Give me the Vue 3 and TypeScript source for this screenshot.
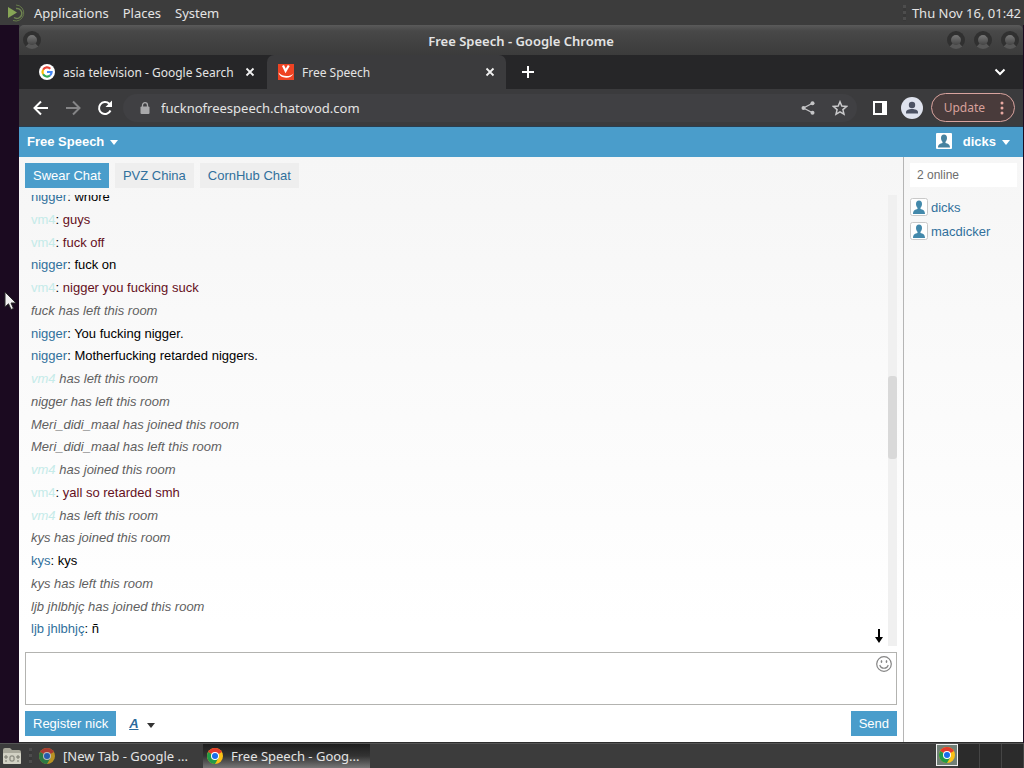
<script setup lang="ts">
import { ref } from 'vue'

interface Line {
  nick: string
  text: string
  kind: 'plain' | 'red' | 'event'
  pale?: boolean
}

const lines: Line[] = [
  { nick: 'nigger', text: 'whore', kind: 'plain' },
  { nick: 'vm4', text: 'guys', kind: 'red', pale: true },
  { nick: 'vm4', text: 'fuck off', kind: 'red', pale: true },
  { nick: 'nigger', text: 'fuck on', kind: 'plain' },
  { nick: 'vm4', text: 'nigger you fucking suck', kind: 'red', pale: true },
  { nick: 'fuck', text: 'has left this room', kind: 'event' },
  { nick: 'nigger', text: 'You fucking nigger.', kind: 'plain' },
  { nick: 'nigger', text: 'Motherfucking retarded niggers.', kind: 'plain' },
  { nick: 'vm4', text: 'has left this room', kind: 'event', pale: true },
  { nick: 'nigger', text: 'has left this room', kind: 'event' },
  { nick: 'Meri_didi_maal', text: 'has joined this room', kind: 'event' },
  { nick: 'Meri_didi_maal', text: 'has left this room', kind: 'event' },
  { nick: 'vm4', text: 'has joined this room', kind: 'event', pale: true },
  { nick: 'vm4', text: 'yall so retarded smh', kind: 'red', pale: true },
  { nick: 'vm4', text: 'has left this room', kind: 'event', pale: true },
  { nick: 'kys', text: 'has joined this room', kind: 'event' },
  { nick: 'kys', text: 'kys', kind: 'plain' },
  { nick: 'kys', text: 'has left this room', kind: 'event' },
  { nick: 'ljb jhlbhjç', text: 'has joined this room', kind: 'event' },
  { nick: 'ljb jhlbhjç', text: 'ñ', kind: 'plain' },
]

const rooms = ['Swear Chat', 'PVZ China', 'CornHub Chat']
const room = ref(rooms[0])
const users = ['dicks', 'macdicker']
const draft = ref('')
const address = ref('fucknofreespeech.chatovod.com')
</script>

<template>
  <div class="desktop">
    <header class="panel">
      <svg class="mate" viewBox="0 0 20 20" width="20" height="20" aria-hidden="true">
        <path d="M9 2a8 8 0 1 1-3 15.500" fill="none" stroke="#667a4a" stroke-width="1" />
        <path d="M9 5.500a5 5 0 1 1-2 9" fill="none" stroke="#6f8451" stroke-width="1.500" />
        <path d="M1 4v11l9-5.500z" fill="#87a556" />
      </svg>
      <button class="menu">Applications</button>
      <button class="menu">Places</button>
      <button class="menu">System</button>
      <span class="grip end"></span>
      <time class="clock">Thu Nov 16, 01:42</time>
    </header>

    <div class="stage">
      <section class="window">
        <div class="titlebar">
          <button class="knob" aria-label="Window menu"></button>
          <h1>Free Speech - Google Chrome</h1>
          <div class="knobs">
            <button class="knob" aria-label="Minimize"></button>
            <button class="knob" aria-label="Maximize"></button>
            <button class="knob" aria-label="Close window"></button>
          </div>
        </div>

        <div class="tabs">
          <div class="tab">
            <svg viewBox="0 0 16 16" width="16" height="16" aria-hidden="true">
              <circle cx="8" cy="8" r="8" fill="#fff" />
              <g fill="none" stroke-width="2.200">
                <path d="M4.100 5.700A4.600 4.600 0 0 1 11.300 4.700" stroke="#ea4335" />
                <path d="M4.100 5.700a4.600 4.600 0 0 0 0 4.600" stroke="#fbbc05" />
                <path d="M4.100 10.300a4.600 4.600 0 0 0 6.900 1.200" stroke="#34a853" />
                <path d="M11 11.500A4.600 4.600 0 0 0 12.600 8H8" stroke="#4285f4" />
              </g>
            </svg>
            <span class="label">asia television - Google Search</span>
            <button class="x" aria-label="Close tab">
              <svg viewBox="0 0 10 10" width="10" height="10"><path d="M1.500 1.500l7 7M8.500 1.500l-7 7" stroke="#f1f1f1" stroke-width="1.800" /></svg>
            </button>
          </div>
          <div class="tab active">
            <svg viewBox="0 0 16 16" width="16" height="16" aria-hidden="true">
              <rect width="16" height="16" fill="#ee4323" />
              <path d="M5 1.500l2.600 5.500 3.200-5.500" fill="none" stroke="#fff" stroke-width="2.200" />
              <path d="M.500 8.500c1.500 6.500 12.500 7 15 1-2 2-4 2.500-7 2.500s-6-1-8-3.500z" fill="#fff" />
            </svg>
            <span class="label">Free Speech</span>
            <button class="x" aria-label="Close tab">
              <svg viewBox="0 0 10 10" width="10" height="10"><path d="M1.500 1.500l7 7M8.500 1.500l-7 7" stroke="#f1f1f1" stroke-width="1.800" /></svg>
            </button>
          </div>
          <button class="plus" aria-label="New tab">
            <svg viewBox="0 0 12 12" width="12" height="12"><path d="M6 0v12M0 6h12" stroke="#fff" stroke-width="2" /></svg>
          </button>
          <button class="chev" aria-label="Search tabs">
            <svg viewBox="0 0 12 8" width="12" height="8"><path d="M1.500 1.500L6 6l4.500-4.500" fill="none" stroke="#fff" stroke-width="2" /></svg>
          </button>
        </div>

        <div class="toolbar">
          <button aria-label="Back">
            <svg viewBox="0 0 16 16" width="16" height="16"><path d="M15 8H2M8 1.500L1.500 8 8 14.500" fill="none" stroke="#fff" stroke-width="2" /></svg>
          </button>
          <button aria-label="Forward">
            <svg viewBox="0 0 16 16" width="16" height="16"><path d="M1 8h13M8 1.500L14.500 8 8 14.500" fill="none" stroke="#858587" stroke-width="2" /></svg>
          </button>
          <button aria-label="Reload">
            <svg viewBox="0 0 16 16" width="16" height="16"><path d="M13.500 10.500A6 6 0 1 1 12.300 3.800L13.500 5" fill="none" stroke="#fff" stroke-width="2" /><path d="M15 .500V7H8.500z" fill="#fff" /></svg>
          </button>
          <label class="address">
            <svg viewBox="0 0 10 12" width="10" height="12" aria-hidden="true"><path d="M2.500 5V3.200a2.500 2.500 0 0 1 5 0V5" fill="none" stroke="#a9a9ab" stroke-width="1.300" /><rect x=".500" y="4.500" width="9" height="7.500" rx="1" fill="#a9a9ab" /></svg>
            <input v-model="address" aria-label="Address" />
            <svg viewBox="0 0 14 14" width="14" height="14" aria-hidden="true"><path d="M11.500 2.200L2.500 7l9 4.800" fill="none" stroke="#c5c5c7" stroke-width="1.300" /><g fill="#c5c5c7"><circle cx="11.500" cy="2.200" r="2" /><circle cx="2.500" cy="7" r="2" /><circle cx="11.500" cy="11.800" r="2" /></g></svg>
            <svg class="star" viewBox="0 0 16 16" width="16" height="16" aria-hidden="true"><path d="M8 1.800l1.800 4.300 4.700.4-3.600 3.100 1.100 4.600-4-2.400-4 2.400 1.100-4.600L1.500 6.500l4.700-.4z" fill="none" stroke="#c9c9cb" stroke-width="1.500" /></svg>
          </label>
          <button class="side" aria-label="Side panel">
            <svg viewBox="0 0 14 14" width="14" height="14"><path d="M0 0h14v14H0zM2 2v10h7V2z" fill="#fff" fill-rule="evenodd" /></svg>
          </button>
          <button class="avatar" aria-label="Profile">
            <svg viewBox="0 0 22 22" width="22" height="22"><circle cx="11" cy="11" r="11" fill="#dfe3ee" /><circle cx="11" cy="8" r="3.200" fill="#4c5263" /><path d="M5 16.500v-1.300c0-4.300 12-4.300 12 0v1.300z" fill="#4c5263" /></svg>
          </button>
          <button class="update">
            Update
            <svg viewBox="0 0 4 14" width="4" height="14" aria-hidden="true"><g fill="#e9a9a2"><circle cx="2" cy="2" r="1.500" /><circle cx="2" cy="7" r="1.500" /><circle cx="2" cy="12" r="1.500" /></g></svg>
          </button>
        </div>

        <div class="site">
          <div class="bar">
            <button>Free Speech <i class="caret"></i></button>
            <button>
              <svg class="person" viewBox="0 0 16 16" width="16" height="16" aria-hidden="true"><rect width="16" height="16" rx="1" fill="#fff" /><path d="M5 5a3 3.500 0 1 1 6 0c0 2-.8 3-1.500 3.800v1.200c2 .7 4.500 1 4.500 4.500H2c0-3.500 2.500-3.800 4.500-4.500V8.800C5.800 8 5 7 5 5z" fill="#4682a0" /></svg>
              dicks <i class="caret"></i>
            </button>
          </div>
          <div class="body">
            <main class="chat">
              <nav class="rooms">
                <button v-for="r in rooms" :key="r" :class="{ on: r === room }" @click="room = r">{{ r }}</button>
              </nav>
              <div class="logbox">
                <div class="log">
                  <p v-for="(l, i) in lines" :key="i" :class="l.kind">
                    <template v-if="l.kind === 'event'"><span :class="{ pale: l.pale }">{{ l.nick }}</span>{{ ' ' + l.text }}</template>
                    <template v-else><a href="#" :class="{ pale: l.pale }">{{ l.nick }}</a>{{ ': ' }}<span class="msg">{{ l.text }}</span></template>
                  </p>
                </div>
                <button class="down" aria-label="Scroll to bottom">
                  <svg viewBox="0 0 8 14" width="8" height="14"><path d="M3 0h2v8h3l-4 6-4-6h3z" fill="#000" /></svg>
                </button>
                <div class="track"><div class="thumb"></div></div>
              </div>
              <div class="compose">
                <textarea v-model="draft" aria-label="Message"></textarea>
                <button class="smile" aria-label="Smileys">
                  <svg viewBox="0 0 16 16" width="16" height="16"><circle cx="8" cy="8" r="7.300" fill="none" stroke="#858585" stroke-width="1.200" /><path d="M3.800 9c1 4.300 7.400 4.300 8.400 0" fill="none" stroke="#858585" stroke-width="1.200" /><ellipse cx="5.500" cy="5.500" rx=".8" ry="1.600" fill="#858585" /><ellipse cx="10.500" cy="5.500" rx=".8" ry="1.600" fill="#858585" /></svg>
                </button>
              </div>
              <div class="actions">
                <button class="blue">Register nick</button>
                <button class="font" aria-label="Text style"><span>A</span><i class="caret"></i></button>
                <button class="blue send">Send</button>
              </div>
            </main>
            <aside class="people">
              <div class="count">2 online</div>
              <a v-for="u in users" :key="u" href="#">
                <svg viewBox="0 0 18 18" width="18" height="18" aria-hidden="true"><rect x=".500" y=".500" width="17" height="17" rx="2" fill="#fff" stroke="#c9c9c9" /><path d="M6 6a3 3.500 0 1 1 6 0c0 2-.8 3-1.500 3.800V11c2 .7 4.500 1 4.500 5H3c0-4 2.500-4.300 4.500-5V9.800C6.800 9 6 8 6 6z" fill="#4389ab" /></svg>
                {{ u }}
              </a>
            </aside>
          </div>
        </div>
      </section>
      <svg class="cursor" viewBox="0 0 13 20" width="13" height="20" aria-hidden="true"><path d="M1 1v15l3.500-3.200L7 18.500l2.500-1L7 12h5z" fill="#f1f1f1" stroke="#2a2a2a" stroke-width="1" /></svg>
    </div>

    <footer class="panel taskbar">
      <button class="files" aria-label="Files">
        <svg viewBox="0 0 20 18" width="20" height="18"><path d="M1 3q0-2 2-2h5l2 2h7q2 0 2 2v10q0 2-2 2H3q-2 0-2-2z" fill="#aaa99c" /><rect x="1" y="6" width="18" height="11" rx="1" fill="#d2d1c4" /><g fill="none" stroke="#77766c"><rect x="8" y="9" width="4" height="5" rx="1" /><path d="M3 9h2v2H3zM15 9h2v2h-2zM3 14h2M15 14h2" /></g></svg>
      </button>
      <span class="grip"></span>
      <button class="task dim">
        <svg viewBox="0 0 16 16" width="16" height="16" aria-hidden="true"><circle cx="8" cy="8" r="8" fill="#fbc116" /><path d="M8 8L1.100 4A8 8 0 0 1 14.900 4z" fill="#e33b2e" /><path d="M1.100 4A8 8 0 0 0 8 16l3.500-6L8 8z" fill="#229a48" /><circle cx="8" cy="8" r="4" fill="#fff" /><circle cx="8" cy="8" r="3" fill="#1a6dea" /></svg>
        <span>[New Tab - Google ...</span>
      </button>
      <button class="task current">
        <svg viewBox="0 0 16 16" width="16" height="16" aria-hidden="true"><circle cx="8" cy="8" r="8" fill="#fbc116" /><path d="M8 8L1.100 4A8 8 0 0 1 14.900 4z" fill="#e33b2e" /><path d="M1.100 4A8 8 0 0 0 8 16l3.500-6L8 8z" fill="#229a48" /><circle cx="8" cy="8" r="4" fill="#fff" /><circle cx="8" cy="8" r="3" fill="#1a6dea" /></svg>
        <span>Free Speech - Goog...</span>
      </button>
      <div class="spaces">
        <button class="shown" aria-label="Workspace 1">
          <svg viewBox="0 0 16 16" width="16" height="16"><circle cx="8" cy="8" r="8" fill="#fbc116" /><path d="M8 8L1.100 4A8 8 0 0 1 14.900 4z" fill="#e33b2e" /><path d="M1.100 4A8 8 0 0 0 8 16l3.500-6L8 8z" fill="#229a48" /><circle cx="8" cy="8" r="4" fill="#fff" /><circle cx="8" cy="8" r="3" fill="#1a6dea" /></svg>
        </button>
        <button aria-label="Workspace 2"></button>
        <button aria-label="Workspace 3"></button>
        <button aria-label="Workspace 4"></button>
      </div>
    </footer>
  </div>
</template>

<style>
body {
  margin: 0;
}
</style>

<style scoped>
* {
  box-sizing: border-box;
}
.desktop {
  display: flex;
  flex-direction: column;
  height: 100vh;
  overflow: hidden;
  background: #1b0a20;
  font-family: 'Noto Sans', 'Open Sans', sans-serif;
  font-size: 13px;
  color: #e4e4e4;
}
button {
  display: flex;
  align-items: center;
  justify-content: center;
  padding: 0;
  border: 0;
  background: none;
  color: inherit;
  font: inherit;
  white-space: nowrap;
}
svg {
  display: block;
  flex: none;
}
a {
  color: #31709c;
  text-decoration: none;
}
.panel {
  display: flex;
  align-items: center;
  flex: none;
  height: 25px;
  background: #3c3c3c;
}
.mate {
  margin: 0 7px;
}
.menu {
  margin-right: 14px;
}
.grip {
  width: 3px;
  height: 16px;
  background: repeating-linear-gradient(#4d4d4d 0 3px, #383838 3px 6px);
}
.end {
  margin-left: auto;
}
.clock {
  margin: 0 3px 0 6px;
}
.stage {
  position: relative;
  display: flex;
  flex: 1;
  min-height: 0;
  padding: 0 1px 0 19px;
}
.window {
  display: flex;
  flex-direction: column;
  flex: 1;
  min-width: 0;
  background: #3b3b3d;
}
.titlebar {
  display: grid;
  grid-template-columns: 1fr auto 1fr;
  align-items: center;
  height: 30px;
  padding: 0 4px;
  border-radius: 5px 5px 0 0;
  background: linear-gradient(#5a5a5a, #484848 20%, #3b3b3b);
}
h1 {
  margin: 0;
  padding-top: 2px;
  font-size: 13px;
  font-weight: 600;
}
.knob {
  width: 18px;
  height: 18px;
  border: 4px solid #303030;
  border-bottom-color: #575757;
  border-radius: 50%;
  background: linear-gradient(#777, #444);
}
.knobs {
  display: flex;
  justify-content: flex-end;
  gap: 9px;
}
.tabs {
  display: flex;
  flex: none;
  height: 34px;
  background: #262628;
}
.tab {
  display: flex;
  align-items: center;
  width: 248px;
  padding: 0 11px 0 20px;
  font-size: 12px;
}
.tab:not(.active) {
  padding-right: 12px;
}
.tab.active {
  width: 239px;
  padding: 0 11px;
  border-radius: 7px 7px 0 0;
  background: #3b3b3d;
}
.tab .label {
  flex: 1;
  margin-left: 8px;
  white-space: nowrap;
}
.plus {
  margin-left: 16px;
}
.chev {
  margin: 0 17px 0 auto;
}
.toolbar {
  display: flex;
  align-items: center;
  flex: none;
  height: 38px;
  padding: 0 8px 0 14px;
  gap: 16px;
  border-bottom: 1px solid #293e50;
  background: #3b3b3d;
}
.address {
  display: flex;
  align-items: center;
  flex: 1;
  height: 28px;
  margin-left: -6px;
  padding: 0 9px 0 17px;
  border-radius: 14px;
  background: #404043;
}
.address input {
  flex: 1;
  min-width: 0;
  margin-left: 11px;
  padding: 0;
  border: 0;
  outline: 0;
  background: none;
  color: #e4e4e4;
  font: inherit;
}
.star {
  margin-left: 17px;
}
.side {
  margin-right: -2px;
}
.avatar {
  margin-right: -8px;
}
.update {
  gap: 15px;
  height: 29px;
  padding: 0 10px 0 12px;
  border: 1px solid #d9a49f;
  border-radius: 15px;
  background: #493b3b;
  color: #d8a19b;
  font-size: 12px;
}
.site {
  display: flex;
  flex-direction: column;
  flex: 1;
  min-height: 0;
  font-family: 'Liberation Sans', Arial, sans-serif;
}
.bar {
  display: flex;
  justify-content: space-between;
  flex: none;
  height: 30px;
  padding: 0 13px 2px 8px;
  background: #4a9dcb;
  color: #fff;
  font-weight: bold;
  text-shadow: 1px 1px 1px #36799f;
}
.caret {
  width: 0;
  height: 0;
  margin: 2px 0 0 6px;
  border: 4px solid transparent;
  border-top: 5px solid;
  border-bottom: 0;
}
.person {
  margin-right: 11px;
}
.body {
  display: flex;
  flex: 1;
  min-height: 0;
  border-bottom: 1px solid #2d2d2d;
  background: linear-gradient(#f6f6f6, #fff 80%);
  color: #000;
}
.chat {
  display: flex;
  flex-direction: column;
  flex: 1;
  min-width: 0;
  padding: 6px;
}
.rooms {
  display: flex;
  gap: 6px;
}
.rooms button {
  height: 25px;
  padding: 0 8px;
  background: #eee;
  color: #31709c;
}
.rooms .on {
  background: #4a9dcb;
  color: #fff;
}
.logbox {
  position: relative;
  display: flex;
  flex: 1;
  min-height: 0;
  margin: 7px 0 6px;
}
.log {
  display: flex;
  flex-direction: column;
  justify-content: flex-end;
  flex: 1;
  overflow: hidden;
  padding: 0 6px;
  line-height: 1.75;
}
.log p {
  flex: none;
  margin: 0;
}
.log p:last-child {
  margin-bottom: 5px;
}
.red .msg {
  color: #65101c;
}
.event {
  color: #5f5f5f;
  font-style: italic;
}
.log .pale {
  color: #c5ebe9;
}
.down {
  position: absolute;
  right: 14px;
  bottom: 3px;
}
.track {
  flex: none;
  width: 9px;
  background: #f0f0f0;
}
.thumb {
  height: 83px;
  margin-top: 181px;
  border-radius: 3px;
  background: #d9d9d9;
}
.compose {
  position: relative;
  display: flex;
}
textarea {
  width: 100%;
  height: 53px;
  padding: 6px;
  border: 1px solid #b3b3b0;
  outline: 0;
  background: #fff;
  font: inherit;
  resize: none;
}
.smile {
  position: absolute;
  top: 4px;
  right: 5px;
}
.actions {
  display: flex;
  margin-top: 6px;
}
.blue {
  height: 25px;
  padding: 0 8px;
  background: #4a9dcb;
  color: #fff;
}
.font {
  margin-left: 13px;
  color: #333;
}
.font span {
  color: #2b6a9c;
  font-weight: bold;
  font-style: italic;
  text-decoration: underline;
}
.font .caret {
  margin: 4px 0 0 8px;
}
.send {
  margin-left: auto;
}
.people {
  width: 120px;
  padding: 6px;
  border-left: 1px solid #b5b5b5;
}
.count {
  height: 24px;
  margin-bottom: 8px;
  padding: 0 7px;
  background: #fff;
  color: #6d6d6d;
  font-size: 12px;
  line-height: 24px;
}
.people a {
  display: flex;
  align-items: center;
  gap: 3px;
  height: 24px;
}
.cursor {
  position: absolute;
  top: 266px;
  left: 4px;
}
.taskbar {
  border-top: 1px solid #555;
}
.files {
  margin: 0 7px 0 2px;
}
.task {
  justify-content: flex-start;
  gap: 8px;
  width: 167px;
  height: 24px;
  padding-left: 7px;
}
.dim svg {
  opacity: 0.65;
}
.current {
  margin-left: 4px;
  padding-left: 4px;
  background: linear-gradient(#1d1d1d, #333 50%, #777);
}
.spaces {
  display: flex;
  margin-left: auto;
}
.spaces button {
  width: 22px;
  height: 24px;
  border-right: 1px solid #454545;
  background: #2b2b2b;
}
.spaces .shown {
  height: 22px;
  border: 1px solid #eee;
  background: #718077;
}
</style>
